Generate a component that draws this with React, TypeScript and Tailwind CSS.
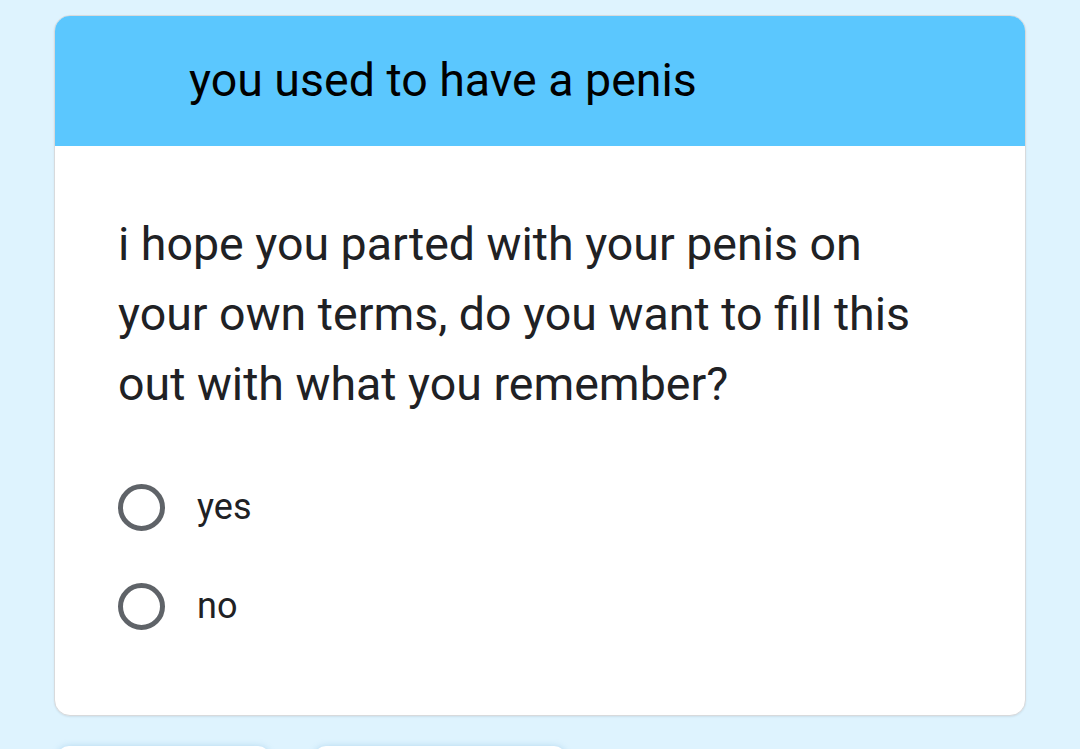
import React from "react";

type Option = { id: string; label: string };

const options: Option[] = [
  { id: "yes", label: "yes" },
  { id: "no", label: "no" },
];

function Radio({ label }: { label: string }) {
  return (
    <label className="flex items-center h-[99px] gap-[32px] cursor-pointer">
      <span className="block w-[47px] h-[47px] rounded-full border-[5px] border-[#5f6368]" />
      <span className="text-[36px] text-[#202124] pb-[2px]">{label}</span>
    </label>
  );
}

export default function App() {
  return (
    <div
      className="w-[1080px] h-[749px] overflow-hidden bg-[#def3fe] pt-[15px]"
      style={{ fontFamily: "Roboto, 'Noto Sans', sans-serif" }}
    >
      {/* question card */}
      <div className="ml-[54px] w-[972px] rounded-[16px] border border-[#d8dadc] bg-white overflow-hidden shadow-[0_1px_2px_rgba(0,0,0,0.08)]">
        <div className="h-[131px] bg-[#5bc7fe] flex items-center pl-[135px] -mx-px -mt-px">
          <h1 className="text-[46.5px] text-black leading-none pb-[1px]">you used to have a penis</h1>
        </div>

        <div className="pl-[63px] pr-[60px] pt-[63px] pb-[59px]">
          <p className="text-[46.5px] leading-[70px] text-[#202124] max-w-[820px]">
            i hope you parted with your penis on your own terms, do you want to fill this out with what you
            remember?
          </p>

          <div className="mt-[39px] flex flex-col">
            {options.map((o) => (
              <Radio key={o.id} label={o.label} />
            ))}
          </div>
        </div>
      </div>

      {/* next buttons peeking below */}
      <div className="flex gap-[44px] ml-[57px] mt-[30px]">
        <div className="w-[213px] h-[40px] rounded-[12px] bg-white shadow-[0_0_6px_rgba(120,180,220,0.4)]" />
        <div className="w-[252px] h-[40px] rounded-[12px] bg-white shadow-[0_0_6px_rgba(120,180,220,0.4)]" />
      </div>
    </div>
  );
}
